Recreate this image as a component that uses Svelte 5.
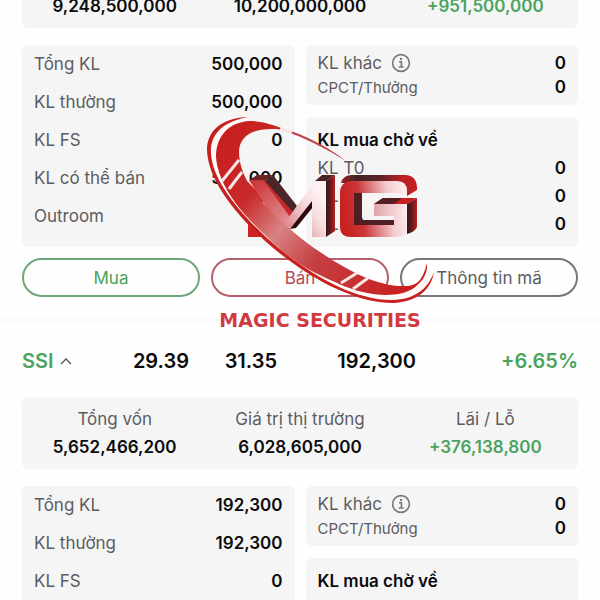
<script lang="ts">
  type Row = { label: string; value: string };
  type Position = {
    id: string;
    header: { symbol: string; cost: string; price: string; volume: string; change: string } | null;
    summary: Array<{ label?: string; value: string; up?: boolean }>;
    volumes: Row[];
    other: string[];
    pending: Row[];
    actions: boolean;
  };

  const positions: Position[] = [
    {
      id: 'first',
      header: null,
      summary: [
        { value: '9,248,500,000' },
        { value: '10,200,000,000' },
        { value: '+951,500,000', up: true },
      ],
      volumes: [
        { label: 'Tổng KL', value: '500,000' },
        { label: 'KL thường', value: '500,000' },
        { label: 'KL FS', value: '0' },
        { label: 'KL có thể bán', value: '500,000' },
        { label: 'Outroom', value: '' },
      ],
      other: ['0', '0'],
      pending: [
        { label: 'KL T0', value: '0' },
        { label: 'KL T1', value: '0' },
        { label: 'KL T2', value: '0' },
      ],
      actions: true,
    },
    {
      id: 'ssi',
      header: { symbol: 'SSI', cost: '29.39', price: '31.35', volume: '192,300', change: '+6.65%' },
      summary: [
        { label: 'Tổng vốn', value: '5,652,466,200' },
        { label: 'Giá trị thị trường', value: '6,028,605,000' },
        { label: 'Lãi / Lỗ', value: '+376,138,800', up: true },
      ],
      volumes: [
        { label: 'Tổng KL', value: '192,300' },
        { label: 'KL thường', value: '192,300' },
        { label: 'KL FS', value: '0' },
      ],
      other: ['0', '0'],
      pending: [],
      actions: false,
    },
  ];
</script>

<main class="page">
  {#each positions as p (p.id)}
    <section class="position">
      {#if p.header}
        <div class="header">
          <button class="symbol">
            {p.header.symbol}
            <svg width="12" height="8" viewBox="0 0 12 8"><path d="M1 7 L6 2 L11 7" /></svg>
          </button>
          <span>{p.header.cost}</span>
          <span>{p.header.price}</span>
          <span>{p.header.volume}</span>
          <span class="up">{p.header.change}</span>
        </div>
      {/if}

      <div class="card summary" class:cut={!p.header}>
        {#each p.summary as s}
          <div>
            {#if s.label}<div class="label">{s.label}</div>{/if}
            <div class="value" class:up={s.up}>{s.value}</div>
          </div>
        {/each}
      </div>

      <div class="details">
        <div class="card volumes">
          {#each p.volumes as v}
            <div class="row">
              <span class="label">{v.label}</span><span class="value">{v.value}</span>
            </div>
          {/each}
        </div>

        <div class="side">
          <div class="card other">
            <div class="row">
              <span class="label">KL khác
                <svg class="info" width="20" height="20" viewBox="0 0 20 20">
                  <circle cx="10" cy="10" r="8.4" />
                  <path d="M8 8.8 H10.4 V14 M7.8 14 H12.6" />
                  <circle class="dot" cx="10" cy="6" r="1.2" />
                </svg>
              </span>
              <span class="value">{p.other[0]}</span>
            </div>
            <div class="row">
              <span class="label small">CPCT/Thưởng</span><span class="value">{p.other[1]}</span>
            </div>
          </div>
          <div class="card pending">
            <div class="title">KL mua chờ về</div>
            {#each p.pending as r}
              <div class="row">
                <span class="label">{r.label}</span><span class="value">{r.value}</span>
              </div>
            {/each}
          </div>
        </div>
      </div>

      {#if p.actions}
        <div class="actions">
          <button class="buy">Mua</button>
          <button class="sell">Bán</button>
          <button class="more">Thông tin mã</button>
        </div>
      {/if}
    </section>
  {/each}

  <!-- brand watermark over the list -->
  <svg class="brand" width="240" height="230" viewBox="200 110 240 230" role="img" aria-label="Magic Securities">
    <defs>
      <linearGradient id="band" gradientUnits="userSpaceOnUse" x1="225" y1="145" x2="400" y2="295">
        <stop offset="0" stop-color="#c8201f" />
        <stop offset=".22" stop-color="#c7292a" />
        <stop offset=".42" stop-color="#d98283" />
        <stop offset=".62" stop-color="#c54043" />
        <stop offset="1" stop-color="#c8201f" />
      </linearGradient>
      <linearGradient id="stroke-m" gradientUnits="userSpaceOnUse" x1="250" y1="182" x2="290" y2="228">
        <stop offset="0" stop-color="#c93236" />
        <stop offset="1" stop-color="#e3989b" />
      </linearGradient>
      <linearGradient id="leg" gradientUnits="userSpaceOnUse" x1="290" y1="225" x2="325" y2="200">
        <stop offset="0" stop-color="#dd9297" />
        <stop offset=".6" stop-color="#f7dee1" />
        <stop offset="1" stop-color="#fdf1f2" />
      </linearGradient>
      <linearGradient id="side" x1="0" y1="0" x2="1" y2="0">
        <stop offset="0" stop-color="#35191a" />
        <stop offset=".35" stop-color="#54191c" />
        <stop offset="1" stop-color="#b51f22" />
      </linearGradient>
      <linearGradient id="top" x1="0" y1="0" x2="1" y2="0">
        <stop offset="0" stop-color="#9a2124" />
        <stop offset=".2" stop-color="#442325" />
        <stop offset=".5" stop-color="#5a2326" />
        <stop offset=".8" stop-color="#b92124" />
        <stop offset="1" stop-color="#c8201f" />
      </linearGradient>
      <linearGradient id="front-g" gradientUnits="userSpaceOnUse" x1="342" y1="215" x2="406" y2="205">
        <stop offset="0" stop-color="#c8201f" />
        <stop offset=".3" stop-color="#cc3539" />
        <stop offset=".75" stop-color="#f2ccd0" />
        <stop offset="1" stop-color="#fdecef" />
      </linearGradient>
      <linearGradient id="bar-g" x1="0" y1="0" x2="1" y2="0">
        <stop offset="0" stop-color="#e3a4a8" />
        <stop offset="1" stop-color="#fdecef" />
      </linearGradient>
    </defs>

    <!-- M -->
    <path fill="#cf2424" d="M248 182 L262 196 L268 237 H248 Z" />
    <path fill="#6e2427" d="M249 180 L257 175 H273 L265 181 Z" />
    <path fill="#c9282b" d="M262 181 H267 L294 211 L288 226 L266 196 Z" />
    <path fill="#4a2628" d="M265 181 L273 175 L297 206 L293 212 Z" />
    <path fill="url(#stroke-m)" d="M249 180 H263 L290 217 L289 229 H280 Z" />
    <path fill="#2d090c" d="M289 229 L313 199 V207 L296 228 Z" />
    <path fill="url(#leg)" d="M315 181 H326 V237 H312 V201 L290 229 L286 221 Z" />
    <path fill="#4a2425" d="M315 181 L322 175 H335 L326 181 Z" />
    <path fill="url(#side)" d="M326 181 L335 175 V231 L326 237 Z" />

    <!-- G -->
    <path fill="url(#top)" d="M341 183 Q343 175 352 175 H405 Q416 175 417 187 V190 L407 196 L404 183 Z" />
    <path fill="url(#front-g)" fill-rule="evenodd" d="M353 181 H397 Q407 181 407 191 V196 L399 193 H354 V225 H394 V216 H374 V204 H407 V228 Q407 237 397 237 H351 Q340 237 340 227 V193 Q340 181 353 181 Z" />
    <path fill="url(#bar-g)" d="M374 204 H407 V216 H374 Z" />
    <path fill="#4e2022" d="M354 193 H362 V220 H394 V225 H354 Z" />
    <path fill="#c8201f" d="M374 204 L383 198 H417 L407 204 Z" />
    <path fill="#542022" d="M374 204 L383 198 H402 L394 204 Z" />
    <path fill="url(#side)" d="M407 204 L417 198 V227 Q415 232 407 234 Z" />

    <!-- orbit -->
    <path fill="#fffaf8" d="M250 119 C228 119 210 131 210 152 C212 180 238 214 267 240 C304 273 354 301 393 300 C414 299 426 291 430 276 L423 278 C407 300 366 296 337 282 C305 267 290 257 265 234 C239 210 219 184 216 158 C215 136 229 123 250 120 Z" />
    <path fill="#c8201f" d="M248 117 C219 118 207 133 207 150 C208 180 234 212 264 240 C304 276 353 303 393 303 C417 302 431 290 434 272 C427 291 413 299 393 300 C354 301 306 273 267 238 C239 212 212 180 211 153 C210 132 226 121 248 117 Z" />
    <path fill="url(#band)" d="M290 131 C274 125 262 121 250 121 C229 122 216 136 216 157 C218 184 239 211 265 235 C287 257 304 269 337 283 C369 298 399 298 414 288 C423 281 428 273 427 263 C423 278 419 286 405 286 C379 287 350 272 320 252 C302 240 278 220 262 202 C247 184 239 169 239 151 C240 133 259 125 290 131 Z" />
    <path fill="#c0474b" d="M284 129 C304 134 328 147 346 161 C326 149 304 137 284 131 Z" />
    <path class="shine" d="M222 181 L239 160 M229 189 L242 172 M280 129 L292 132 M341 283 L357 273 M353 289 L368 278" />
    <text x="320" y="327" text-anchor="middle">MAGIC SECURITIES</text>
  </svg>
</main>

<style>
  :global(body) { margin: 0; background: #fefefe; }
  .page { position: relative; height: 100vh; overflow: hidden; font-family: Inter, "Noto Sans", sans-serif; font-size: 17px; color: #0b0b0c; }
  .position { padding: 0 22px 22px; }
  .position + .position { border-top: 2px solid #f8f8f9; }
  .header { display: grid; grid-template-columns: 80fr 87fr 88fr 139fr 162fr; align-items: center; height: 76px; padding-top: 4px; box-sizing: border-box; font-size: 20px; font-weight: 600; text-align: right; }
  .symbol { display: flex; align-items: center; gap: 6px; border: 0; padding: 0; background: none; font: inherit; color: #4ba35e; }
  .symbol path { fill: none; stroke: #555; stroke-width: 1.4; }
  .card { background: #f5f5f6; border-radius: 6px; }
  .label { color: #5c5c60; }
  .value { font-weight: 600; }
  .up { color: #4ba35e; }

  .summary { display: grid; grid-template-columns: repeat(3, 1fr); padding: 8px 0; line-height: 28px; text-align: center; }
  /* scrolled under the top edge */
  .summary.cut { margin-top: -8px; padding-top: 0; }
  .details { display: grid; grid-template-columns: 1fr 1fr; gap: 11px; margin-top: 17px; }
  .row { display: flex; align-items: center; justify-content: space-between; }
  .volumes { padding: 0 12px 12px; }
  .volumes .row { height: 38px; }
  .side { display: flex; flex-direction: column; gap: 12px; }
  .other { padding: 6px 12px; }
  .other .row { height: 24px; }
  .other .label { display: flex; align-items: center; gap: 9px; }
  .small { font-size: 15px; }
  .info { fill: none; stroke: #77777b; stroke-width: 1.6; }
  .info .dot { fill: #77777b; stroke: none; }
  .pending { flex: 1; padding: 9px 12px 8px; line-height: 28px; }
  .title { font-weight: 600; }

  .actions { display: grid; grid-template-columns: repeat(3, 1fr); gap: 11px; margin-top: 11px; }
  .actions button { height: 39px; border: 2px solid; border-radius: 20px; padding: 0; background: none; font: inherit; }
  .actions .buy { border-color: #6fa67a; color: #4ba35e; }
  .actions .sell { border-color: #b5606a; color: #b84a55; }
  .actions .more { border-color: #77777b; color: #5c5c60; }

  .brand { position: absolute; top: 110px; left: calc(50% - 100px); pointer-events: none; }
  .shine { fill: none; stroke: #fbe6e6; stroke-width: 3; }
  .brand text { font: bold 19px "DejaVu Sans", sans-serif; fill: #cf3b41; }
</style>
